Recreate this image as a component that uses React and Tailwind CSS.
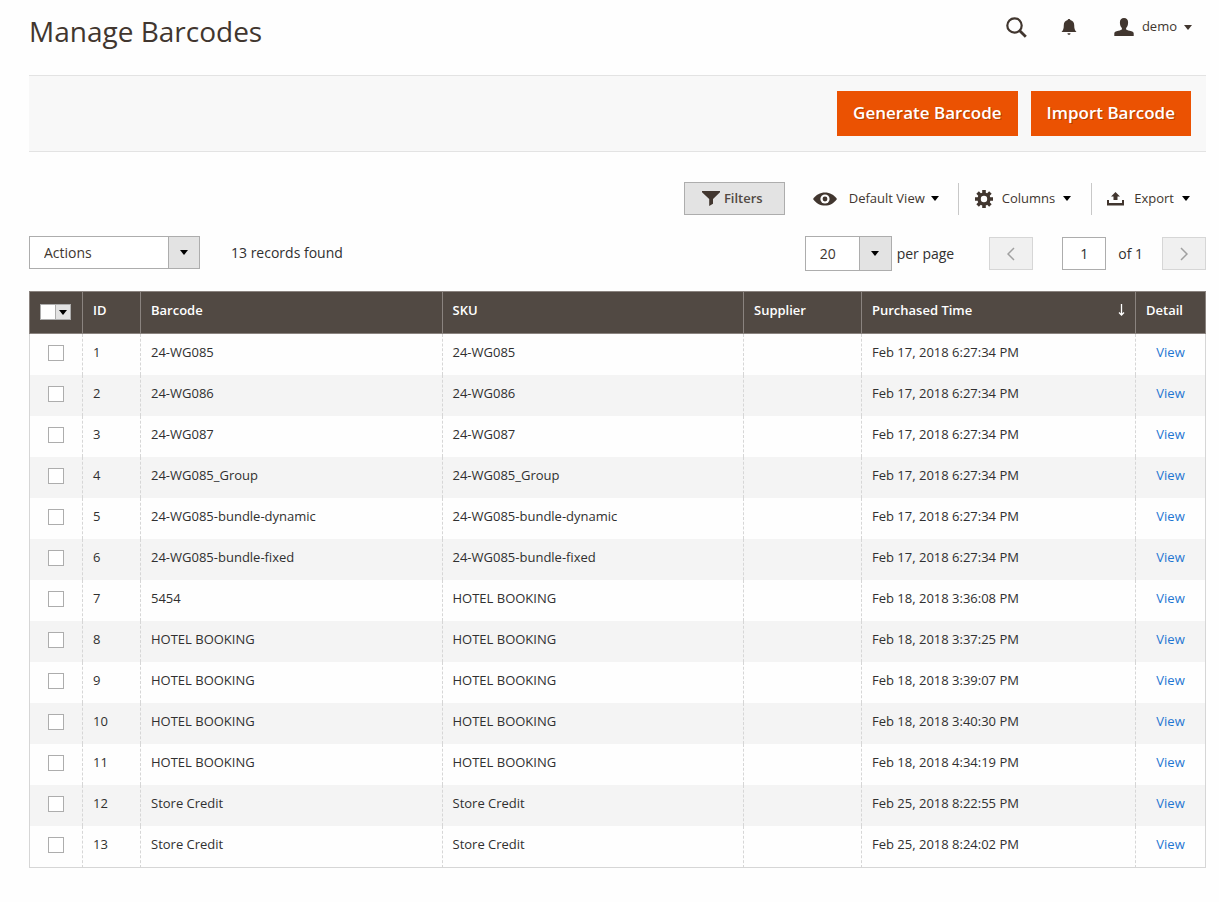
import React, { useState } from "react";

const initialRows = [
  { id: 1, barcode: "24-WG085", sku: "24-WG085", time: "Feb 17, 2018 6:27:34 PM" },
  { id: 2, barcode: "24-WG086", sku: "24-WG086", time: "Feb 17, 2018 6:27:34 PM" },
  { id: 3, barcode: "24-WG087", sku: "24-WG087", time: "Feb 17, 2018 6:27:34 PM" },
  { id: 4, barcode: "24-WG085_Group", sku: "24-WG085_Group", time: "Feb 17, 2018 6:27:34 PM" },
  { id: 5, barcode: "24-WG085-bundle-dynamic", sku: "24-WG085-bundle-dynamic", time: "Feb 17, 2018 6:27:34 PM" },
  { id: 6, barcode: "24-WG085-bundle-fixed", sku: "24-WG085-bundle-fixed", time: "Feb 17, 2018 6:27:34 PM" },
  { id: 7, barcode: "5454", sku: "HOTEL BOOKING", time: "Feb 18, 2018 3:36:08 PM" },
  { id: 8, barcode: "HOTEL BOOKING", sku: "HOTEL BOOKING", time: "Feb 18, 2018 3:37:25 PM" },
  { id: 9, barcode: "HOTEL BOOKING", sku: "HOTEL BOOKING", time: "Feb 18, 2018 3:39:07 PM" },
  { id: 10, barcode: "HOTEL BOOKING", sku: "HOTEL BOOKING", time: "Feb 18, 2018 3:40:30 PM" },
  { id: 11, barcode: "HOTEL BOOKING", sku: "HOTEL BOOKING", time: "Feb 18, 2018 4:34:19 PM" },
  { id: 12, barcode: "Store Credit", sku: "Store Credit", time: "Feb 25, 2018 8:22:55 PM" },
  { id: 13, barcode: "Store Credit", sku: "Store Credit", time: "Feb 25, 2018 8:24:02 PM" },
];

function Caret({ className = "text-black" }) {
  return (
    <svg viewBox="0 0 8 5" className={`w-2 h-[5px] shrink-0 ${className}`} fill="currentColor">
      <path d="M0 0h8L4 5z" />
    </svg>
  );
}

function SearchIcon() {
  return (
    <svg viewBox="0 0 21 21" className="w-[21px] h-[21px]" fill="none" stroke="#41362f">
      <circle cx="8.5" cy="8.5" r="7.2" strokeWidth="2.2" />
      <path d="M13.5 13.5l6.3 6.3" strokeWidth="2.8" />
    </svg>
  );
}

function BellIcon() {
  return (
    <svg viewBox="0 0 16 18" className="w-4 h-[18px]" fill="#41362f">
      <path d="M8 1c.8 0 1.200.4 1.300 1C11.800 2.600 13.200 4.600 13.200 7c0 3.600.6 5.400 2.300 7H.5c1.700-1.600 2.300-3.400 2.300-7 0-2.400 1.400-4.400 3.900-5 .1-.6.5-1 1.300-1z" />
      <path d="M6.500 15.200h3c0 1-.6 1.600-1.500 1.600s-1.500-.6-1.500-1.600z" />
    </svg>
  );
}

function UserIcon() {
  return (
    <svg viewBox="0 0 20 18" className="w-5 h-[18px]" fill="#41362f">
      <path d="M10 0c2.600 0 4.100 1.700 4.100 4.500 0 2.300-.7 4.400-2 5.600v1.200c.4.700 1.400 1 3.500 1.500 2.900.7 4.100 1.300 4.100 2.700V18H.3v-2.500c0-1.400 1.200-2 4.100-2.700 2.100-.5 3.100-.8 3.500-1.500v-1.200c-1.300-1.200-2-3.300-2-5.600C5.900 1.700 7.400 0 10 0z" />
    </svg>
  );
}

function FunnelIcon() {
  return (
    <svg viewBox="0 0 18 15" className="w-[18px] h-[15px]" fill="#41362f">
      <path d="M0 0h18v1.200L11 8v4.800L7.200 15V8L0 1.200z" />
    </svg>
  );
}

function EyeIcon() {
  return (
    <svg viewBox="0 0 24 14" className="w-6 h-[14px]">
      <path d="M0 7C3 2.700 7.200.4 12 .4S21 2.700 24 7c-3 4.300-7.200 6.600-12 6.600S3 11.300 0 7z" fill="#41362f" />
      <circle cx="12" cy="7" r="4.600" fill="#fefefe" />
      <circle cx="12" cy="7" r="2.400" fill="#41362f" />
    </svg>
  );
}

function GearIcon() {
  return (
    <svg viewBox="0 0 18 18" className="w-[18px] h-[18px]">
      <g stroke="#41362f" strokeWidth="3.600">
        <path d="M9 0v4M9 14v4M0 9h4M14 9h4" />
        <path d="M2.600 2.600l2.900 2.900M12.500 12.500l2.900 2.900M15.400 2.600l-2.900 2.900M5.500 12.500l-2.900 2.900" />
      </g>
      <circle cx="9" cy="9" r="4.900" fill="none" stroke="#41362f" strokeWidth="3.400" />
    </svg>
  );
}

function ExportIcon() {
  return (
    <svg viewBox="0 0 17 14" className="w-[17px] h-[14px]" fill="#41362f">
      <path d="M8.500 0l4.500 4.500h-2.500V8h-4V4.500H4z" />
      <path d="M0 8h2v3h13V8h2v5.500H0z" />
    </svg>
  );
}

function ChevronIcon({ d }) {
  return (
    <svg viewBox="0 0 8 14" className="w-2 h-[14px]" fill="none" stroke="#a0a0a0" strokeWidth="1.500">
      <path d={d} />
    </svg>
  );
}

function SelectBox({ label, className, arrowClass, children }) {
  return (
    <div className={`relative ${className}`}>
      <select
        aria-label={label}
        className="block w-full h-full appearance-none bg-white border border-[#adadad] pl-[14px] pr-8 text-sm text-[#41362f]"
      >
        {children}
      </select>
      <span
        className={`absolute inset-y-0 right-0 flex items-center justify-center bg-[#e3e3e3] border border-[#adadad] pointer-events-none ${arrowClass}`}
      >
        <Caret />
      </span>
    </div>
  );
}

const primaryButtonClass =
  "h-[45px] px-4 pb-0.5 bg-[#eb5202] text-white text-[17px] font-semibold [text-shadow:1px_1px_0_rgba(0,0,0,0.25)]";
const checkboxClass =
  "block appearance-none w-4 h-4 bg-white border border-[#adadad] checked:bg-[#41362f]";
const thClass =
  "h-[43px] pt-2 px-[10px] align-top text-left font-semibold leading-5 border-y border-r border-[#8a837f]";
const tdClass = "h-[41px] pt-2 px-[10px] align-top leading-5 border-r border-dashed border-[#d6d6d6]";

export default function App() {
  const [selected, setSelected] = useState([]);
  const [page, setPage] = useState("1");

  const toggleRow = (id) => {
    setSelected((prev) => (prev.includes(id) ? prev.filter((x) => x !== id) : [...prev, id]));
  };

  const toggleAll = () => {
    setSelected(selected.length === initialRows.length ? [] : initialRows.map((r) => r.id));
  };

  return (
    <div className="min-h-screen bg-[#fefefe] pl-[29px] pr-[13px] pb-8 font-['Open_Sans',sans-serif] text-[13px] text-[#303030]">
      {/* Page header */}
      <header className="flex items-start justify-between h-[75px] pt-[11px]">
        <h1 className="text-[28px] leading-10 text-[#41362f]">Manage Barcodes</h1>
        <div className="flex items-center h-8 pr-[14px]">
          <button aria-label="Search">
            <SearchIcon />
          </button>
          <button aria-label="Notifications" className="ml-[34px]">
            <BellIcon />
          </button>
          <button className="ml-[37px] flex items-center text-[#41362f]">
            <UserIcon />
            <span className="ml-2">demo</span>
            <Caret className="ml-[7px] text-[#41362f]" />
          </button>
        </div>
      </header>

      {/* Main actions */}
      <div className="flex justify-end gap-[13px] py-[15px] pr-[15px] bg-[#f8f8f8] border-y border-[#e3e3e3]">
        <button className={primaryButtonClass}>Generate Barcode</button>
        <button className={primaryButtonClass}>Import Barcode</button>
      </div>

      {/* Grid toolbar */}
      <div className="flex items-center justify-end mt-[30px] pr-4 text-[#41362f]">
        <button className="flex items-center justify-center gap-1 w-[101px] h-[33px] pr-1 bg-[#e3e3e3] border border-[#adadad] font-semibold text-[#514943]">
          <FunnelIcon />
          Filters
        </button>
        <button className="flex items-center h-8 pl-7 pr-[19px]">
          <EyeIcon />
          <span className="ml-3 mr-[6px]">Default View</span>
          <Caret />
        </button>
        <button className="flex items-center h-8 pl-4 pr-5 border-l border-[#c8c8c8]">
          <GearIcon />
          <span className="ml-[9px] mr-2">Columns</span>
          <Caret />
        </button>
        <button className="flex items-center h-8 pl-[15px] border-l border-[#c8c8c8]">
          <ExportIcon />
          <span className="ml-[10px] mr-2">Export</span>
          <Caret />
        </button>
      </div>

      {/* Mass actions and paging */}
      <div className="flex items-start justify-between mt-[21px] text-sm">
        <div className="flex items-center">
          <SelectBox label="Actions" className="w-[171px] h-[33px]" arrowClass="w-8">
            <option>Actions</option>
            <option>Delete</option>
          </SelectBox>
          <p className="ml-[31px]">13 records found</p>
        </div>
        <div className="flex items-center">
          <SelectBox label="Records per page" className="w-[87px] h-[35px]" arrowClass="w-[33px]">
            <option>20</option>
            <option>50</option>
            <option>100</option>
          </SelectBox>
          <span className="ml-[5px]">per page</span>
          <button
            disabled
            aria-label="Previous page"
            className="ml-[35px] flex items-center justify-center w-11 h-[33px] bg-[#f0f0f0] border border-[#d6d6d6]"
          >
            <ChevronIcon d="M7 1L1 7l6 6" />
          </button>
          <input
            aria-label="Current page"
            value={page}
            onChange={(e) => setPage(e.target.value)}
            className="ml-[29px] w-11 h-[33px] bg-white border border-[#adadad] text-center"
          />
          <span className="ml-3">of 1</span>
          <button
            disabled
            aria-label="Next page"
            className="ml-[19px] flex items-center justify-center w-11 h-[33px] bg-[#f0f0f0] border border-[#d6d6d6]"
          >
            <ChevronIcon d="M1 1l6 6-6 6" />
          </button>
        </div>
      </div>

      <table className="mt-5 w-full table-fixed border-separate border-spacing-0">
        <colgroup>
          <col className="w-[54px]" />
          <col className="w-[58px]" />
          <col />
          <col />
          <col className="w-[118px]" />
          <col className="w-[274px]" />
          <col className="w-[70px]" />
        </colgroup>
        <thead className="bg-[#514943] text-white">
          <tr>
            <th className="h-[43px] pt-3 pl-[10px] align-top border border-[#8a837f]">
              <div className="flex w-[31px]">
                <input
                  type="checkbox"
                  aria-label="Select all"
                  checked={selected.length === initialRows.length}
                  onChange={toggleAll}
                  className={checkboxClass}
                />
                <button
                  aria-label="Selection options"
                  className="flex items-center justify-center w-[15px] h-4 bg-[#e3e3e3] border-y border-r border-[#adadad]"
                >
                  <Caret />
                </button>
              </div>
            </th>
            <th className={thClass}>ID</th>
            <th className={thClass}>Barcode</th>
            <th className={thClass}>SKU</th>
            <th className={thClass}>Supplier</th>
            <th className={thClass}>
              <div className="flex items-center justify-between">
                Purchased Time
                <svg viewBox="0 0 7 12" className="w-[7px] h-3" fill="none" stroke="#fff">
                  <path d="M3.500 0v11M1 8.500l2.500 2.500L6 8.500" strokeWidth="1.300" />
                </svg>
              </div>
            </th>
            <th className={thClass}>Detail</th>
          </tr>
        </thead>
        <tbody className="[&>tr:last-child>td]:h-[42px] [&>tr:last-child>td]:[border-bottom:1px_solid_#d6d6d6]">
          {initialRows.map((row) => (
            <tr key={row.id} className="even:bg-[#f4f4f4]">
              <td className="h-[41px] pt-[11px] pl-[18px] align-top border-r border-dashed border-[#d6d6d6] [border-left:1px_solid_#d6d6d6]">
                <input
                  type="checkbox"
                  aria-label={`Select barcode ${row.id}`}
                  checked={selected.includes(row.id)}
                  onChange={() => toggleRow(row.id)}
                  className={checkboxClass}
                />
              </td>
              <td className={tdClass}>{row.id}</td>
              <td className={tdClass}>{row.barcode}</td>
              <td className={tdClass}>{row.sku}</td>
              <td className={tdClass}></td>
              <td className={tdClass}>{row.time}</td>
              <td className="h-[41px] pt-2 align-top text-center leading-5 border-r border-[#d6d6d6]">
                <a href="#view" className="text-[#1f76d2]">
                  View
                </a>
              </td>
            </tr>
          ))}
        </tbody>
      </table>
    </div>
  );
}
